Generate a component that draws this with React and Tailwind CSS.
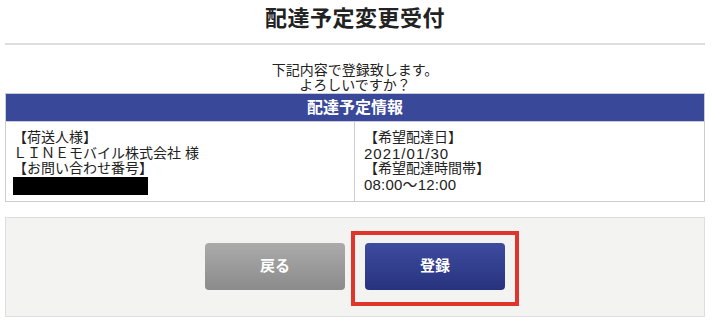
import React from 'react';

const App = () => {
  return (
    <div
      className="w-[725px] h-[335px] bg-white text-[#222222] overflow-hidden"
      style={{ fontFamily: '"Liberation Sans", "Noto Sans CJK JP", sans-serif' }}
    >
      <div className="ml-[5px] w-[700px]">
        {/* Title */}
        <div className="h-[38px] flex items-center justify-center">
          <h1 className="text-[22px] font-bold leading-none tracking-[0.5px]">配達予定変更受付</h1>
        </div>
        <div className="mt-[5px] h-[2px] bg-[#dddddd]" />

        {/* Message */}
        <div className="pt-[18px] text-center text-[14px] leading-[15px]">
          <p>下記内容で登録致します。</p>
          <p>よろしいですか？</p>
        </div>

        {/* Info table */}
        <div className="h-[29px] bg-[#3a4899] border border-[#c9ccd8] flex items-center justify-center">
          <span className="text-white text-[16px] font-bold leading-none">配達予定情報</span>
        </div>
        <div className="grid grid-cols-2 border border-t-0 border-[#cccccc] text-[14px] leading-[15.5px]">
          <div className="pl-[7px] pr-2 pt-[8px] pb-[6px] border-r border-[#cccccc]">
            <p>【荷送人様】</p>
            <p>ＬＩＮＥモバイル株式会社 様</p>
            <p>【お問い合わせ番号】</p>
            <div className="w-[135px] h-[18px] bg-black" />
          </div>
          <div className="pl-[9px] pr-2 pt-[8px] pb-[6px]">
            <p>【希望配達日】</p>
            <p className="text-[15px] tracking-[1px]">2021/01/30</p>
            <p>【希望配達時間帯】</p>
            <p className="text-[15px] tracking-[0.2px]">08:00〜12:00</p>
          </div>
        </div>

        {/* Actions */}
        <div className="mt-[15px] h-[100px] bg-[#f3f3f1] border border-[#dedede] flex items-center justify-center gap-[20px]">
          <button className="w-[140px] h-[47px] rounded-[4px] bg-gradient-to-b from-[#ababab] to-[#8b8b8b] text-white text-[15px] font-bold">
            戻る
          </button>
          <div className="relative">
            <button className="w-[140px] h-[47px] rounded-[4px] bg-gradient-to-b from-[#3e4c9f] to-[#28337e] text-white text-[15px] font-bold">
              登録
            </button>
            <div className="absolute -left-[14px] -right-[14px] -top-[12px] -bottom-[16px] border-[4px] border-[#e0352b] pointer-events-none" />
          </div>
        </div>
      </div>
    </div>
  );
};

export default App;
